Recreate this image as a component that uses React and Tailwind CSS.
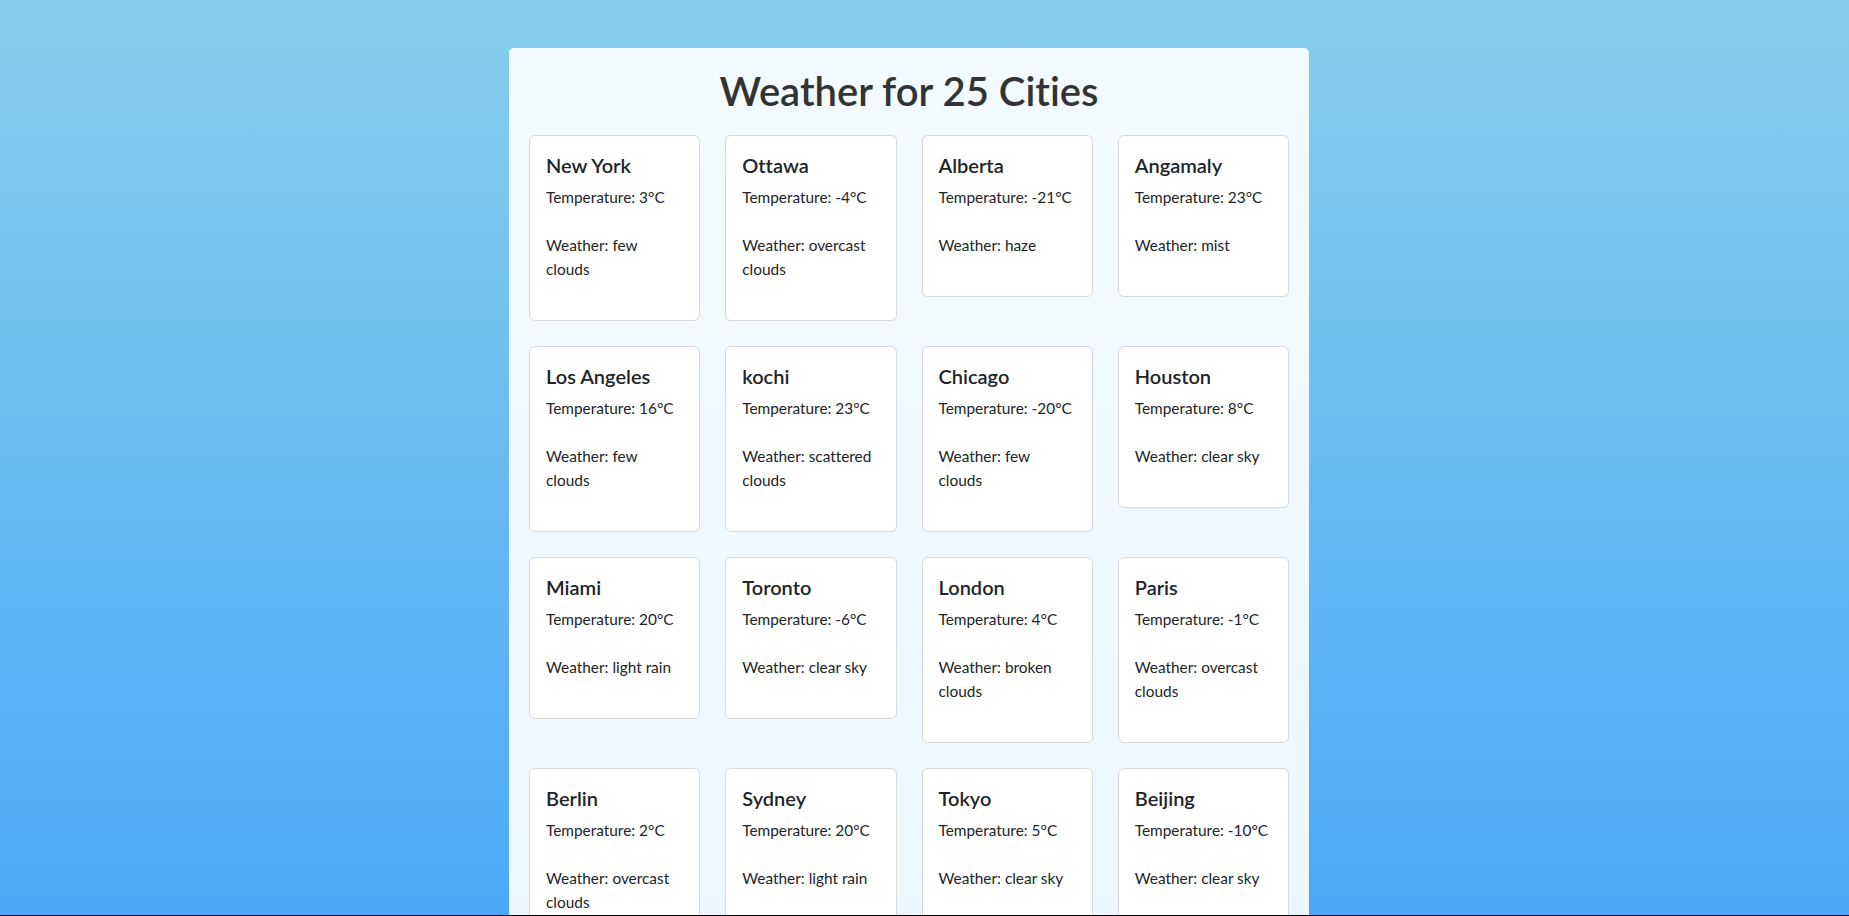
const cities = [
  { name: "New York", temp: 3, weather: "few clouds" },
  { name: "Ottawa", temp: -4, weather: "overcast clouds" },
  { name: "Alberta", temp: -21, weather: "haze" },
  { name: "Angamaly", temp: 23, weather: "mist" },
  { name: "Los Angeles", temp: 16, weather: "few clouds" },
  { name: "kochi", temp: 23, weather: "scattered clouds" },
  { name: "Chicago", temp: -20, weather: "few clouds" },
  { name: "Houston", temp: 8, weather: "clear sky" },
  { name: "Miami", temp: 20, weather: "light rain" },
  { name: "Toronto", temp: -6, weather: "clear sky" },
  { name: "London", temp: 4, weather: "broken clouds" },
  { name: "Paris", temp: -1, weather: "overcast clouds" },
  { name: "Berlin", temp: 2, weather: "overcast clouds" },
  { name: "Sydney", temp: 20, weather: "light rain" },
  { name: "Tokyo", temp: 5, weather: "clear sky" },
  { name: "Beijing", temp: -10, weather: "clear sky" },
];

function CityCard({ city }) {
  return (
    <div className="bg-white border border-[#d6d8db] rounded-[6px] px-4 pt-[17px] pb-[15px] text-[#212529]">
      <h5 className="text-[20px] leading-[24px] font-semibold mb-2">{city.name}</h5>
      <p className="text-[15.4px] leading-[24px] mb-6">Temperature: {city.temp}°C</p>
      <p className="text-[15.4px] leading-[24px] mb-6">Weather: {city.weather}</p>
    </div>
  );
}

export default function App() {
  return (
    <div className="min-h-screen bg-[linear-gradient(to_bottom,#87ceeb,#4aa9f8)] bg-fixed font-['Lato',sans-serif] [font-variant-ligatures:none] pt-12 pr-[31px]">
      <div className="w-[800px] mx-auto bg-white/90 rounded-[5px] px-5 pt-[17px] pb-5">
        <h1 className="text-center text-[40px] leading-[52px] font-semibold text-[#333] mb-[18px]">
          Weather for 25 Cities
        </h1>
        <div className="grid grid-cols-4 gap-[25px] items-start">
          {cities.map((c) => (
            <CityCard key={c.name} city={c} />
          ))}
        </div>
      </div>
      <div className="fixed bottom-0 left-0 right-0 h-px bg-black" />
    </div>
  );
}
